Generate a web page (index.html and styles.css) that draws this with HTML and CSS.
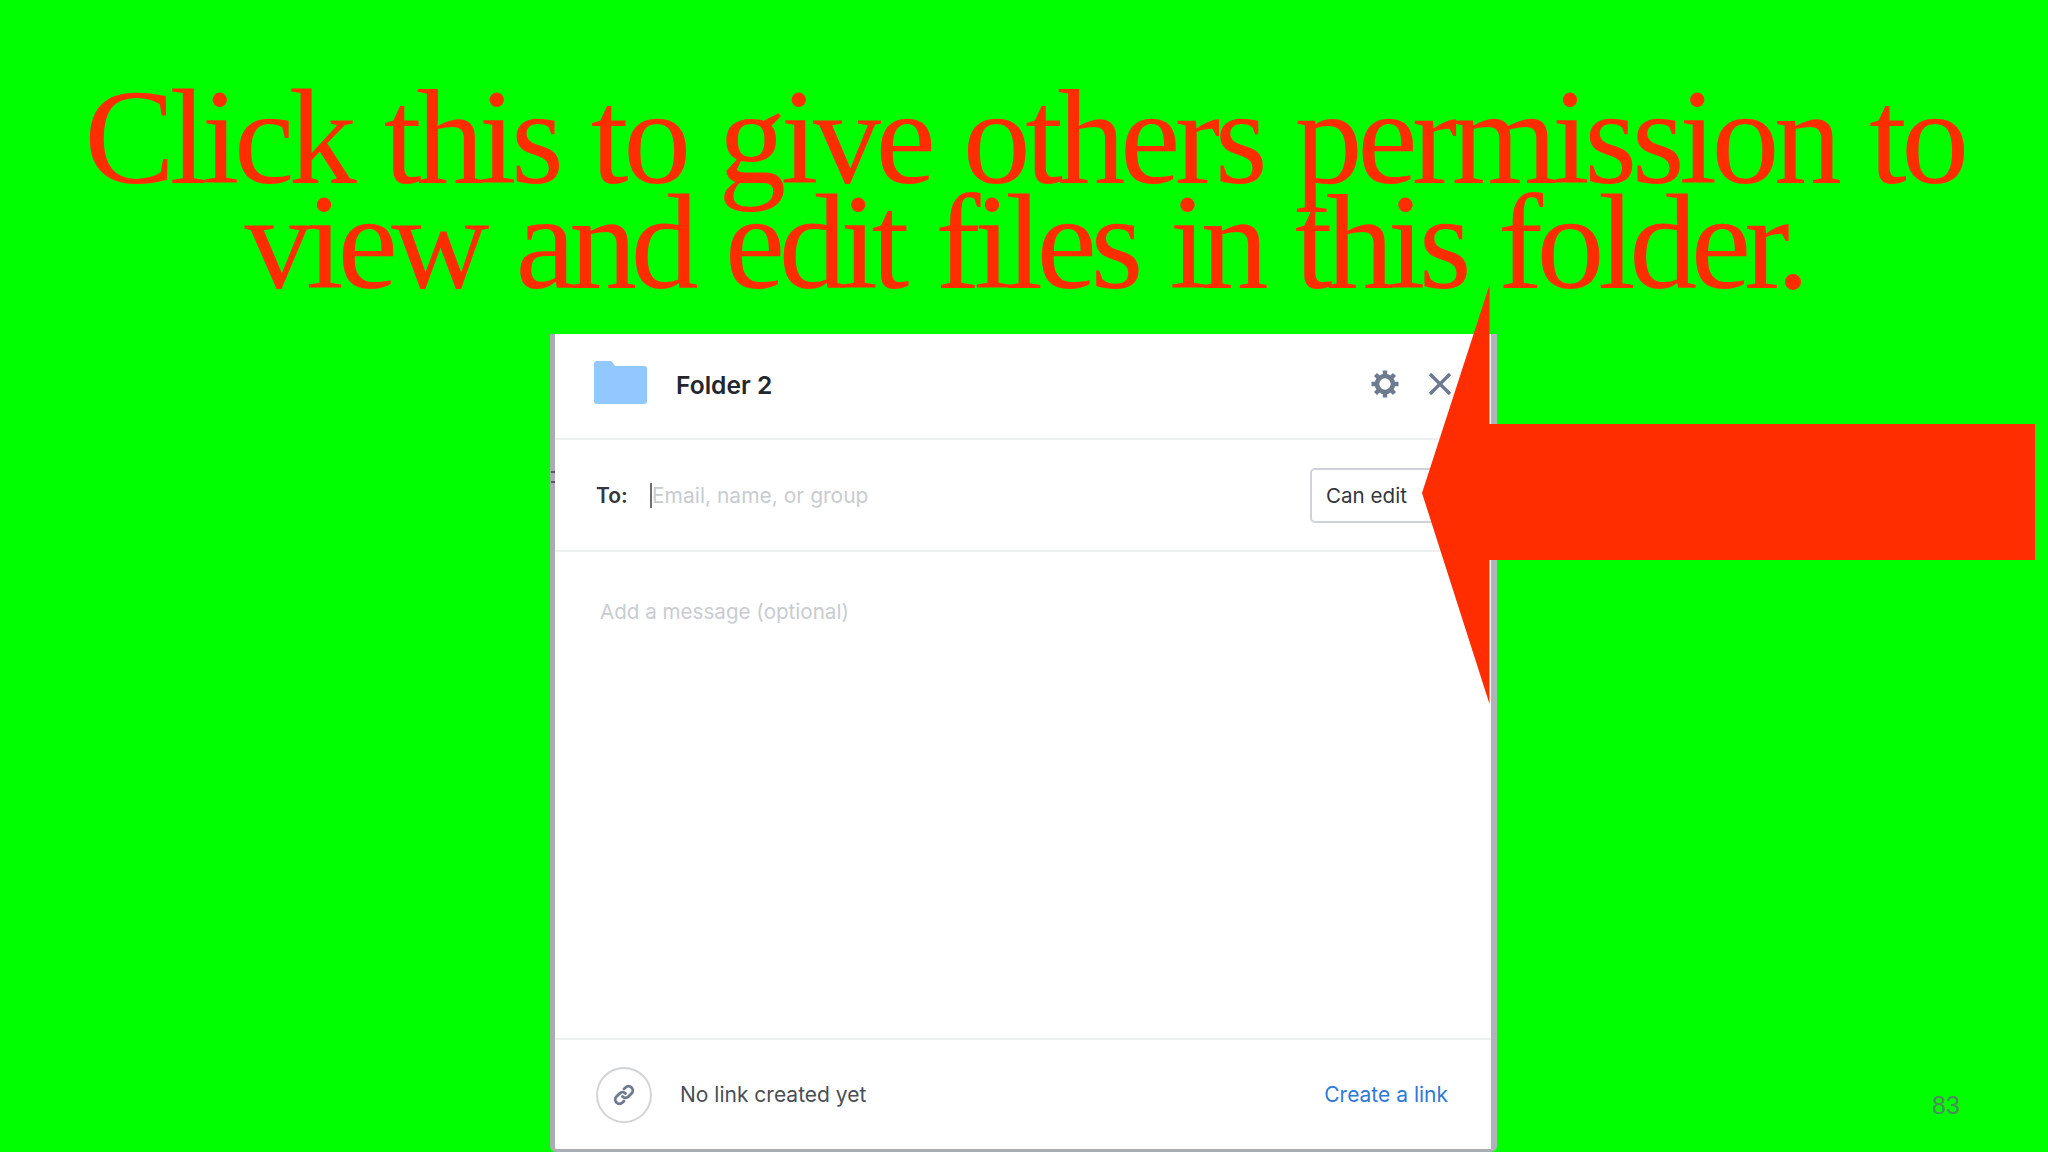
FILE: index.html
```html
<!DOCTYPE html>
<html>
<head>
  <title>Share folder</title>
  <link rel="stylesheet" href="styles.css">
</head>
<body>
  <h1 class="headline"><span class="line-one">Click this to give others permission to</span><br><span class="line-two">view and edit files in this folder.</span></h1>

  <div class="dialog">
    <div class="dialog-header">
      <svg class="folder-icon" viewBox="0 0 53 43">
        <path d="M0 3a3 3 0 0 1 3-3h13a3 3 0 0 1 2.400 1.200L21 5h29a3 3 0 0 1 3 3v32a3 3 0 0 1-3 3H3a3 3 0 0 1-3-3z" fill="#90c8ff"/>
      </svg>
      <span class="folder-name">Folder 2</span>
      <svg class="gear-icon" viewBox="0 0 30 30">
        <g stroke="#6d7a90" fill="none">
          <circle cx="15" cy="15" r="8" stroke-width="4.600"/>
          <path d="M15 1.500v5M15 23.500v5M1.500 15h5M23.500 15h5M5.500 5.500L9 9M21 21l3.500 3.500M5.500 24.500L9 21M21 9l3.500-3.500" stroke-width="4.400"/>
        </g>
      </svg>
      <svg class="close-icon" viewBox="0 0 24 24">
        <path d="M2 2l20 20M22 2L2 22" stroke="#6d7a90" stroke-width="3.400" fill="none"/>
      </svg>
    </div>

    <div class="to-row">
      <span class="to-label">To:</span>
      <span class="caret"></span>
      <span class="to-input">Email, name, or group</span>
      <div class="role-button">Can edit</div>
    </div>

    <div class="message">Add a message (optional)</div>

    <div class="link-row">
      <div class="link-circle">
        <svg class="link-icon" viewBox="0 0 24 24">
          <path d="M10.500 13.500a4 4 0 0 0 6 0l3-3a4 4 0 0 0-6-6l-1.500 1.500M13.500 10.500a4 4 0 0 0-6 0l-3 3a4 4 0 0 0 6 6l1.500-1.500" stroke="#6d7a90" stroke-width="2.800" fill="none" stroke-linecap="round"/>
        </svg>
      </div>
      <span class="link-text">No link created yet</span>
      <span class="link-action">Create a link</span>
    </div>

    <span class="edge-mark"></span>
  </div>

  <svg class="arrow" viewBox="0 0 2048 1152">
    <polygon points="1422,493 1489.500,285 1489.500,424 2035,424 2035,560 1489.500,560 1489.500,704" fill="#ff2d00"/>
  </svg>

  <span class="page-number">83</span>
</body>
</html>
```

FILE: styles.css
```css
html, body {
  margin: 0;
  height: 1152px;
  overflow: hidden;
}

body {
  position: relative;
  width: 2048px;
  background-color: #00ff00;
  font-family: Inter, "Liberation Sans", sans-serif;
}

.headline {
  margin: 0;
  height: 334px;
  padding-top: 85px;
  box-sizing: border-box;
  font-family: "Liberation Serif", serif;
  font-weight: normal;
  font-size: 136px;
  line-height: 105px;
  text-align: center;
  color: #ff2d00;
}

.line-one {
  letter-spacing: -5.500px;
  word-spacing: 4px;
}

.line-two {
  letter-spacing: -6.500px;
  word-spacing: 5px;
}

.dialog {
  position: relative;
  box-sizing: border-box;
  width: 947px;
  height: 818px;
  margin-left: 550px;
  display: flex;
  flex-direction: column;
  background-color: #fff;
  border-left: 5px solid #a9adb3;
  border-right: 6px solid #b0b4ba;
  border-bottom: 3px solid #a9adb3;
  border-bottom-left-radius: 6px;
  border-bottom-right-radius: 6px;
}

.dialog-header {
  display: flex;
  align-items: center;
  height: 104px;
  padding: 0 0 0 39px;
  border-bottom: 2px solid #eeeff1;
}

.folder-icon {
  width: 53px;
  height: 43px;
  margin-top: -7px;
}

.folder-name {
  margin-left: 29px;
  margin-top: -2px;
  font-size: 24.600px;
  font-weight: 600;
  color: #22262e;
}

.gear-icon {
  width: 30px;
  height: 30px;
  margin-left: auto;
  margin-top: -5px;
}

.close-icon {
  width: 24px;
  height: 24px;
  margin-left: 28px;
  margin-right: 39px;
  margin-top: -5px;
}

.to-row {
  display: flex;
  align-items: center;
  height: 110px;
  padding-left: 41px;
  border-bottom: 2px solid #eeeff1;
  font-size: 21px;
}

.to-label {
  width: 54px;
  font-weight: 600;
  color: #33373e;
}

.caret {
  width: 2px;
  height: 25px;
  background-color: #6b6f76;
}

.to-input {
  color: #c9ccd1;
}

.role-button {
  box-sizing: border-box;
  width: 160px;
  height: 55px;
  line-height: 51px;
  margin-left: auto;
  margin-right: 21px;
  padding-left: 14px;
  border: 2px solid #cfd2d7;
  border-radius: 5px;
  font-size: 20.600px;
  color: #33373e;
}

.message {
  flex: 1;
  padding: 47px 0 0 45px;
  font-size: 20.600px;
  color: #c9ccd1;
}

.link-row {
  display: flex;
  align-items: center;
  height: 109px;
  padding: 0 43px 0 41px;
  border-top: 2px solid #eeeff1;
  font-size: 21px;
}

.link-circle {
  box-sizing: border-box;
  width: 56px;
  height: 56px;
  display: flex;
  align-items: center;
  justify-content: center;
  border: 2px solid #d2d4d8;
  border-radius: 50%;
}

.link-icon {
  width: 24px;
  height: 24px;
}

.link-text {
  margin-left: 28px;
  color: #4a4e55;
}

.link-action {
  margin-left: auto;
  color: #2f7ad6;
}

.edge-mark {
  position: absolute;
  left: -4px;
  top: 137px;
  width: 4px;
  height: 8px;
  border-top: 2px solid #55595f;
  border-bottom: 2px solid #55595f;
}

.arrow {
  position: absolute;
  left: 0;
  top: 0;
  width: 2048px;
  height: 1152px;
}

.page-number {
  position: absolute;
  left: 1932px;
  top: 1091px;
  font-family: "Liberation Sans", sans-serif;
  font-size: 25px;
  color: #4f8a5f;
}
```
